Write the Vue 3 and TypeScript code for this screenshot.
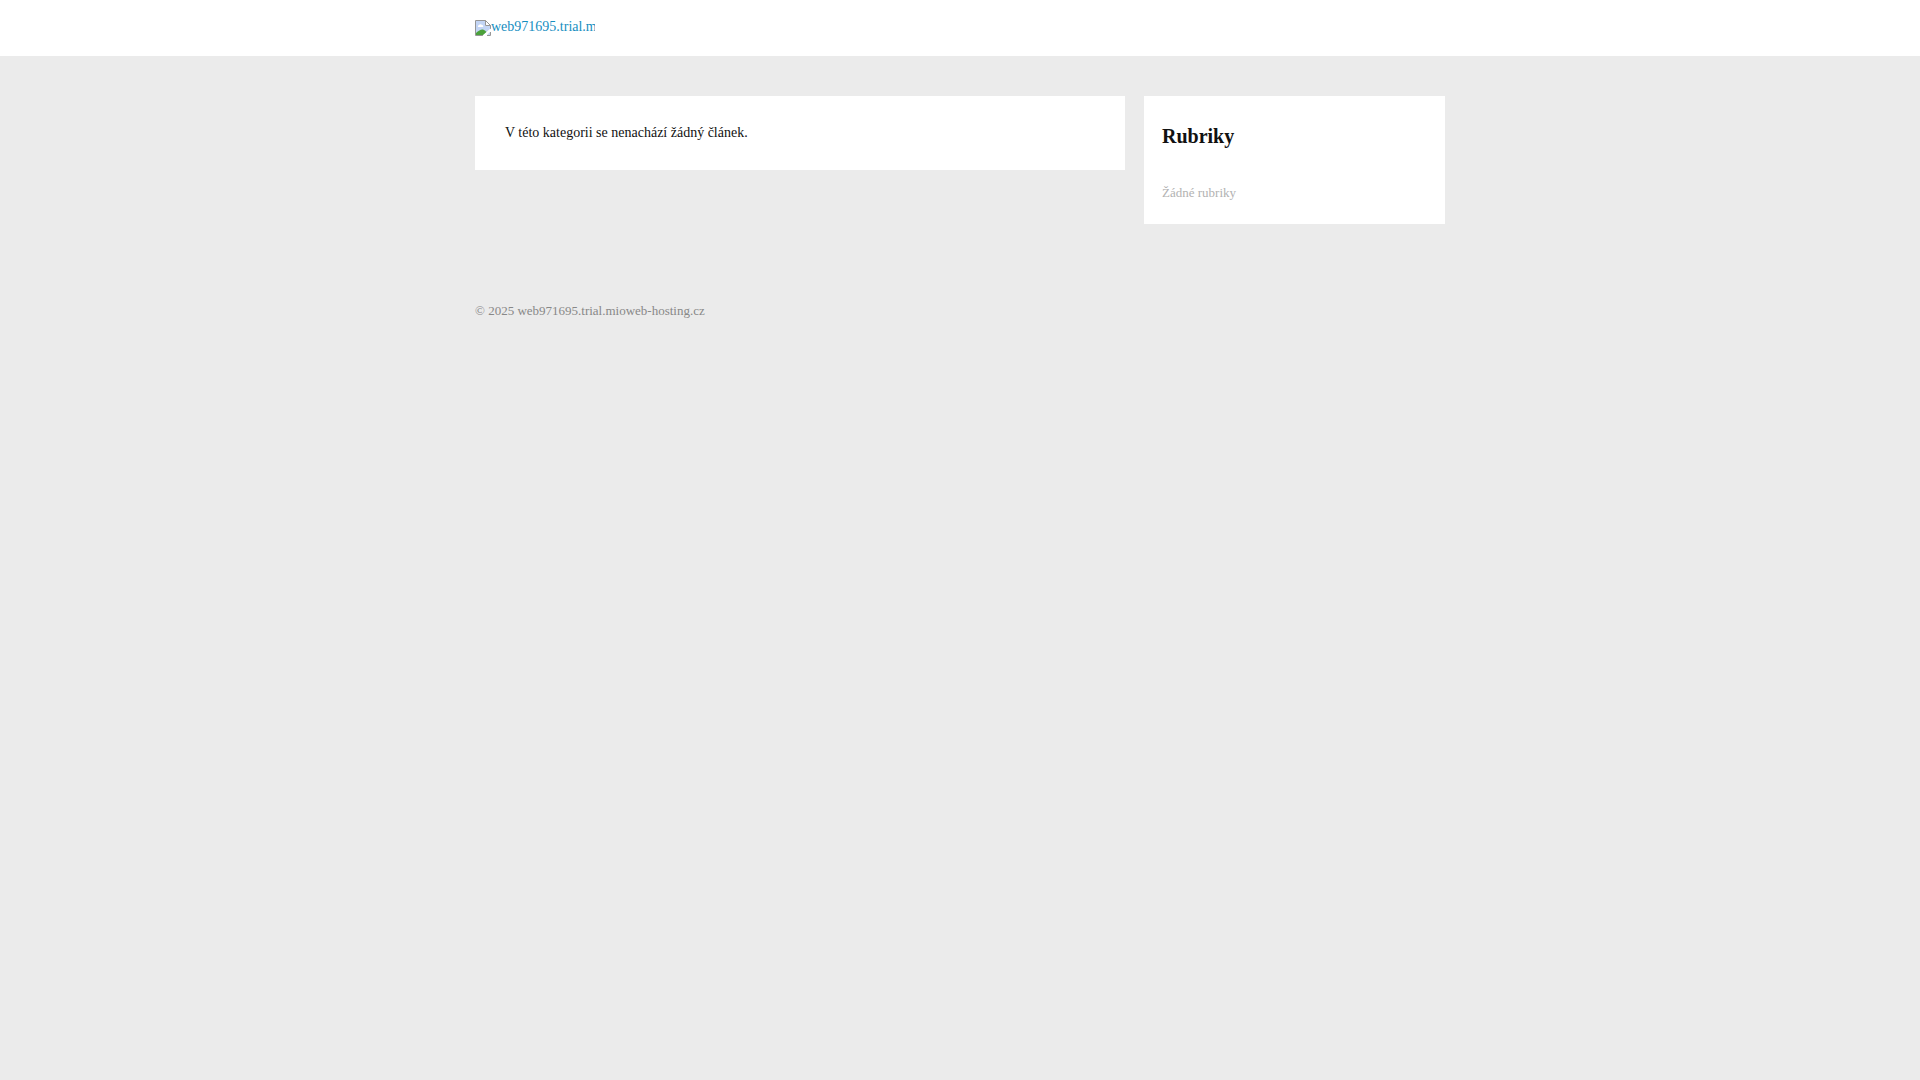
<script setup lang="ts">
const siteName: string = 'web971695.trial.mioweb-hosting.cz'
const year: number = 2025
</script>

<template>
  <div class="page">
    <header class="header">
      <div class="container">
        <a class="logo" href="#">
          <svg class="broken" width="16" height="16" viewBox="0 0 16 16" aria-hidden="true">
            <path d="M1 1H10V6H15V9L8 15H1Z" fill="#c3d5f5" />
            <path d="M3 7a1.500 1.500 0 0 1 1-2a1.800 1.800 0 0 1 3 0a1.200 1.200 0 0 1 1 2Z" fill="#fff" />
            <path d="M1 15V13Q5 9 8 9.500Q10 10 11.500 12L8 15Z" fill="#4ba13b" />
            <path d="M8 15.500H0.500V0.500H10.500L15.500 5.500V9.500" fill="none" stroke="#969696" />
            <path d="M10.500 0.500V5.500H15.500Z" fill="#fff" stroke="#969696" />
            <path d="M16 8.500V11.500L11.500 16H7.500Z" fill="#fff" />
            <path d="M12 15L15 12V15Z" fill="#c3d5f5" />
            <path d="M12 15.500H15.500V12" fill="none" stroke="#969696" />
          </svg><span>{{ siteName }}</span>
        </a>
      </div>
    </header>
    <div class="container columns">
      <main class="content">
        <p>V této kategorii se nenachází žádný článek.</p>
      </main>
      <aside class="sidebar">
        <h2>Rubriky</h2>
        <p>Žádné rubriky</p>
      </aside>
    </div>
    <footer class="container footer">© {{ year }} {{ siteName }}</footer>
  </div>
</template>

<style>
body {
  margin: 0;
  background: #ebebeb;
}
</style>

<style scoped>
.page {
  font-family: "Liberation Serif", "Times New Roman", serif;
  font-size: 14px;
  line-height: 22px;
  color: #111;
}
.container {
  box-sizing: border-box;
  width: 100%;
  max-width: 970px;
  margin: 0 auto;
}
.header {
  padding: 16px 0 18px;
  background: #fff;
}
.logo {
  display: flex;
  align-items: flex-end;
  width: 120px;
  height: 22px;
  overflow: hidden;
  color: #158ebf;
  text-decoration: none;
  white-space: nowrap;
}
.broken {
  flex: none;
  margin-bottom: 2px;
}
.columns {
  display: flex;
  align-items: flex-start;
  gap: 19px;
  padding-top: 40px;
}
.content {
  flex: 1;
  padding: 26px 30px;
  background: #fff;
}
p,
h2 {
  margin: 0;
}
.sidebar {
  box-sizing: border-box;
  width: 301px;
  padding: 24px 18px 20px;
  background: #fff;
}
.sidebar h2 {
  margin-bottom: 30px;
  font-size: 20px;
  line-height: 32px;
}
.sidebar p {
  font-size: 13px;
  line-height: 22px;
  color: #b2b2b2;
}
.footer {
  padding: 76px 0 40px;
  font-size: 13px;
  color: #888;
}
</style>
